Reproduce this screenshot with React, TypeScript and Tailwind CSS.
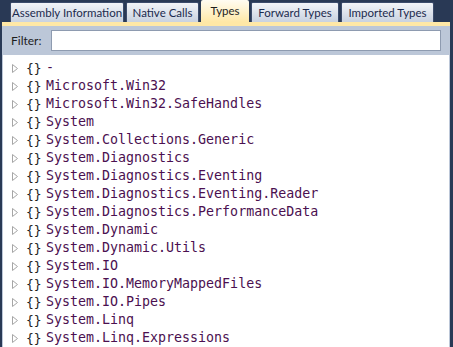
const tabs = [
  { name: "Assembly Information", w: "w-[114px]" },
  { name: "Native Calls", w: "w-[73px]" },
  { name: "Types", w: "w-[48px]", active: true },
  { name: "Forward Types", w: "w-[88px]" },
  { name: "Imported Types", w: "w-[93px]" },
];

const namespaces = [
  "-",
  "Microsoft.Win32",
  "Microsoft.Win32.SafeHandles",
  "System",
  "System.Collections.Generic",
  "System.Diagnostics",
  "System.Diagnostics.Eventing",
  "System.Diagnostics.Eventing.Reader",
  "System.Diagnostics.PerformanceData",
  "System.Dynamic",
  "System.Dynamic.Utils",
  "System.IO",
  "System.IO.MemoryMappedFiles",
  "System.IO.Pipes",
  "System.Linq",
  "System.Linq.Expressions",
];

const Arrow = () => (
  <svg width="6" height="9" viewBox="0 0 6 9" className="shrink-0">
    <path d="M0.5 0.5 L5.5 4.5 L0.5 8.5 Z" fill="white" stroke="#a6a6a6" strokeWidth="1" />
  </svg>
);

export default function App() {
  return (
    <div
      className="w-[453px] h-[347px] overflow-hidden bg-[#293955] flex flex-col pl-[2px] pr-[3px]"
      style={{ fontFamily: "Lato, 'Liberation Sans', sans-serif" }}
    >
      <div className="flex items-end h-[22px] pl-[8px] gap-[2px]">
        {tabs.map((t) =>
          t.active ? (
            <div
              key={t.name}
              className={`${t.w} h-[22px] flex items-center justify-center whitespace-nowrap rounded-t-[2px] bg-gradient-to-b from-[#fffcf2] to-[#ffe8a6] text-[11.5px] text-[#1e1e1e]`}
            >
              {t.name}
            </div>
          ) : (
            <div
              key={t.name}
              className={`${t.w} h-[20px] flex items-center justify-center whitespace-nowrap rounded-t-[2px] border-x border-t border-[#3c4c6c] bg-gradient-to-b from-[#f2f4f8] to-[#c9d2e0] text-[11.5px] text-[#1b2a4e]`}
            >
              {t.name}
            </div>
          )
        )}
      </div>
      <div className="h-[4px] bg-[#ffe8a6]" />
      <div className="flex-1 flex flex-col bg-[#bcc7d8] border-x border-[#bcc7d8]">
        <div className="h-[29px] flex items-center pl-[8px] pr-[8px] gap-[10px]">
          <span className="text-[12px] text-[#1e1e1e]">Filter:</span>
          <div className="flex-1 h-[21px] bg-white border border-[#8e9bb0]" />
        </div>
        <div className="flex-1 bg-white pt-[4px]">
          {namespaces.map((n) => (
            <div key={n} className="h-[18px] flex items-center pl-[9px]">
              <Arrow />
              <span
                className="ml-[8px] text-[13px] text-[#1e1e1e] w-[14px] leading-none"
                style={{ fontFamily: "'DejaVu Sans Mono', monospace" }}
              >
                {"{}"}
              </span>
              <span
                className="ml-[6px] text-[13.3px] text-[#4b1050] leading-none"
                style={{ fontFamily: "'DejaVu Sans Mono', monospace" }}
              >
                {n}
              </span>
            </div>
          ))}
        </div>
      </div>
    </div>
  );
}
